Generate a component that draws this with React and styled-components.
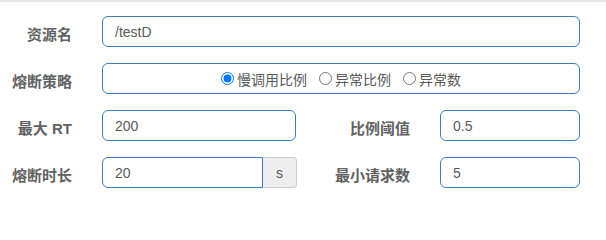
import React from "react"
import styled, { createGlobalStyle } from "styled-components"

const Global = createGlobalStyle`
  body {
    margin: 0;
    background: #fff;
    font-family: "Liberation Sans", "Noto Sans CJK SC", sans-serif;
  }
`
const Page = styled.div`
  border-top: 2px solid #e6e6e6;
  padding-top: 14px;
`
const Form = styled.div`
  display: grid;
  grid-template-columns: 102px 194px 144px 140px;
  grid-auto-rows: 31px;
  row-gap: 16px;
  width: 580px;
`
const Label = styled.div`
  display: flex;
  align-items: center;
  justify-content: flex-end;
  padding: 4px 30px 0 0;
  font-size: 15px;
  font-weight: bold;
  color: #626262;
`
const Input = styled.div`
  grid-column: ${(p) => p.$span || "auto"};
  flex: ${(p) => (p.$addon ? 1 : "none")};
  display: flex;
  align-items: center;
  box-sizing: border-box;
  border: 1px solid #3b7dbf;
  border-radius: ${(p) => (p.$addon ? "6px 0 0 6px" : "6px")};
  padding: 0 12px;
  font-size: 14px;
  color: #5a5a5a;
  justify-content: ${(p) => (p.$center ? "center" : "flex-start")};
`
const Group = styled.div`
  display: flex;
  margin-right: -1px;
`
const Addon = styled.div`
  width: 34px;
  flex: none;
  display: flex;
  align-items: center;
  justify-content: center;
  box-sizing: border-box;
  background: #eee;
  border: 1px solid #ccc;
  border-left: none;
  border-radius: 0 4px 4px 0;
  font-size: 14px;
  color: #555;
`
const Radio = styled.label`
  display: flex;
  align-items: center;
  margin-right: 12px;
  font-size: 14px;
  color: #5a5a5a;
  &:last-child {
    margin-right: 0;
  }
  input {
    margin: 0 3px 0 0;
    width: 13px;
    height: 13px;
  }
`

export default function App() {
  return (
    <Page>
      <Global />
      <Form>
        <Label>资源名</Label>
        <Input $span="2 / 5">/testD</Input>

        <Label>熔断策略</Label>
        <Input $span="2 / 5" $center>
          <Radio>
            <input type="radio" name="grade" defaultChecked />
            慢调用比例
          </Radio>
          <Radio>
            <input type="radio" name="grade" />
            异常比例
          </Radio>
          <Radio>
            <input type="radio" name="grade" />
            异常数
          </Radio>
        </Input>

        <Label>最大 RT</Label>
        <Input>200</Input>
        <Label>比例阈值</Label>
        <Input>0.5</Input>

        <Label>熔断时长</Label>
        <Group>
          <Input $addon>20</Input>
          <Addon>s</Addon>
        </Group>
        <Label>最小请求数</Label>
        <Input>5</Input>
      </Form>
    </Page>
  )
}
